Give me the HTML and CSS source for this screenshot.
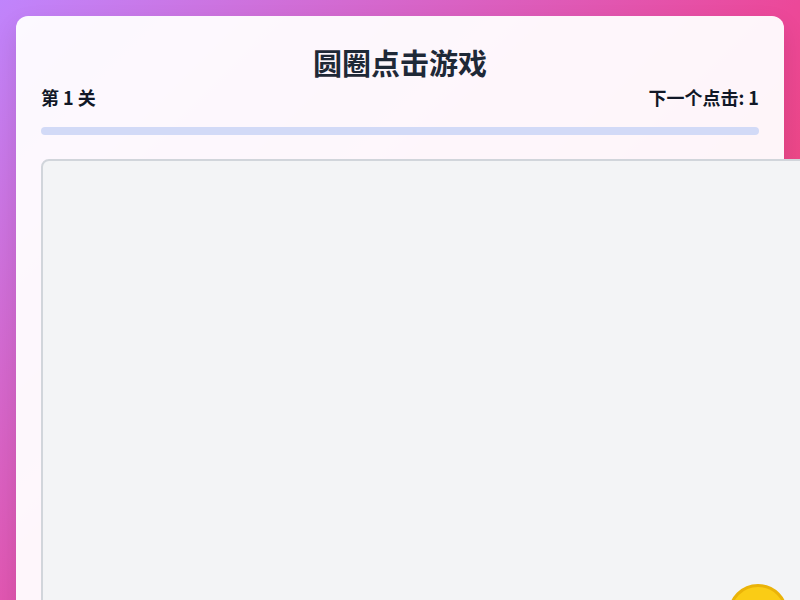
FILE: index.html
```html
<!DOCTYPE html>
<html lang="zh">
<head>
<meta charset="utf-8">
<title>圆圈点击游戏</title>
<link rel="stylesheet" href="styles.css">
</head>
<body>
<div class="card">
  <h1 class="title">圆圈点击游戏</h1>
  <div class="stats">
    <span class="level">第 1 关</span>
    <span class="next">下一个点击: 1</span>
  </div>
  <div class="progress"><div class="progress-fill" style="width:0%"></div></div>
  <div class="game">
    <div class="circle" style="left:685px;top:423px"></div>
  </div>
</div>
</body>
</html>
```
FILE: styles.css
```css
html, body {
  margin: 0;
  padding: 0;
}
body {
  padding: 16px;
  min-height: 100vh;
  box-sizing: border-box;
  background: linear-gradient(to bottom right, #c084fc, #ec4899, #ef4444);
  font-family: "Noto Sans CJK SC", "Noto Sans", sans-serif;
}
.card {
  background: rgba(255, 255, 255, 0.95);
  border-radius: 12px;
  padding: 25px;
  box-shadow: 0 10px 25px rgba(0, 0, 0, 0.1);
}
.title {
  margin: 0;
  text-align: center;
  font-size: 29px;
  line-height: 43px;
  font-weight: 700;
  color: #1f2937;
}
.stats {
  display: flex;
  justify-content: space-between;
  font-size: 18px;
  line-height: 27px;
  font-weight: 700;
  color: #111827;
}
.progress {
  margin-top: 16px;
  height: 8px;
  border-radius: 4px;
  background: #d2daf7;
  overflow: hidden;
}
.progress-fill {
  height: 100%;
  background: #6366f1;
}
.game {
  position: relative;
  margin-top: 24px;
  width: 800px;
  height: 600px;
  box-sizing: border-box;
  border: 2px solid #d1d5db;
  border-radius: 8px;
  background: #f3f4f6;
}
.circle {
  position: absolute;
  width: 60px;
  height: 60px;
  box-sizing: border-box;
  border-radius: 50%;
  background: #facc15;
  border: 3px solid #eab308;
}
```
